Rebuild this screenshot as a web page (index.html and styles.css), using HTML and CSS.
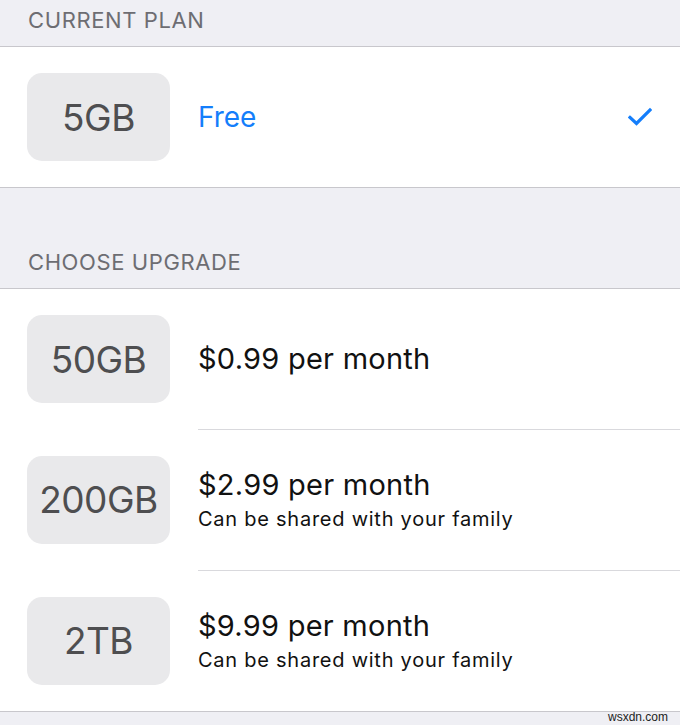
FILE: index.html
```html
<!DOCTYPE html>
<html>
<head>
<meta charset="utf-8">
<link rel="stylesheet" href="styles.css">
</head>
<body>
<div class="page">
  <div class="section-header first">CURRENT PLAN</div>
  <div class="group">
    <div class="row">
      <div class="badge">5GB</div>
      <div class="info"><div class="title blue">Free</div></div>
      <svg class="check" width="24" height="20" viewBox="0 0 24 20"><path d="M2 10.5 L8.5 16.5 L22 3" fill="none" stroke="#147efb" stroke-width="3.2" stroke-linecap="square"/></svg>
    </div>
  </div>
  <div class="section-header second">CHOOSE UPGRADE</div>
  <div class="group">
    <div class="row">
      <div class="badge">50GB</div>
      <div class="info"><div class="title">$0.99 per month</div></div>
    </div>
    <div class="row sep">
      <div class="badge">200GB</div>
      <div class="info"><div class="title">$2.99 per month</div><div class="sub">Can be shared with your family</div></div>
    </div>
    <div class="row sep">
      <div class="badge">2TB</div>
      <div class="info"><div class="title">$9.99 per month</div><div class="sub">Can be shared with your family</div></div>
    </div>
  </div>
  <div class="footer"><span class="wm">wsxdn.com</span></div>
</div>
</body>
</html>
```
FILE: styles.css
```css
* { box-sizing: border-box; }
html, body { margin: 0; padding: 0; }
body { background: #efeff4; font-family: Inter, "Liberation Sans", sans-serif; width: 680px; height: 725px; overflow: hidden; }
.page { display: flex; flex-direction: column; }
.section-header { color: #6d6d72; font-size: 22px; letter-spacing: 0.6px; padding-left: 28px; border-bottom: 1px solid #c8c7cc; }
.section-header.first { height: 47px; padding-top: 7px; }
.section-header.second { height: 102px; padding-top: 61px; border-top: 1px solid #c8c7cc; }
.group { background: #fff; display: flex; flex-direction: column; }
.row { display: flex; align-items: center; height: 140px; padding-left: 27px; position: relative; }
.row.sep::before { content: ""; position: absolute; left: 198px; right: 0; top: 0; border-top: 1px solid #d9d9dd; }
.row.sep { height: 141px; }
.badge { width: 143px; height: 88px; border-radius: 15px; background: #e9e9eb; color: #4e4e50; font-size: 37px; display: flex; align-items: center; justify-content: center; letter-spacing: -0.5px; }
.info { margin-left: 28px; display: flex; flex-direction: column; flex: 1; }
.title { font-size: 29px; color: #111; line-height: 34px; letter-spacing: 0.25px; }
.title.blue { color: #147efb; font-size: 28px; letter-spacing: 0; }
.sub { font-size: 20px; color: #111; line-height: 26px; margin-top: 4px; letter-spacing: 0.75px; }
.check { margin-right: 28px; }
.footer { border-top: 1px solid #c8c7cc; height: 14px; display: flex; justify-content: flex-end; padding-right: 12px; }
.wm { font-family: "Liberation Sans", sans-serif; font-size: 12px; color: #222; line-height: 10px; }
```
